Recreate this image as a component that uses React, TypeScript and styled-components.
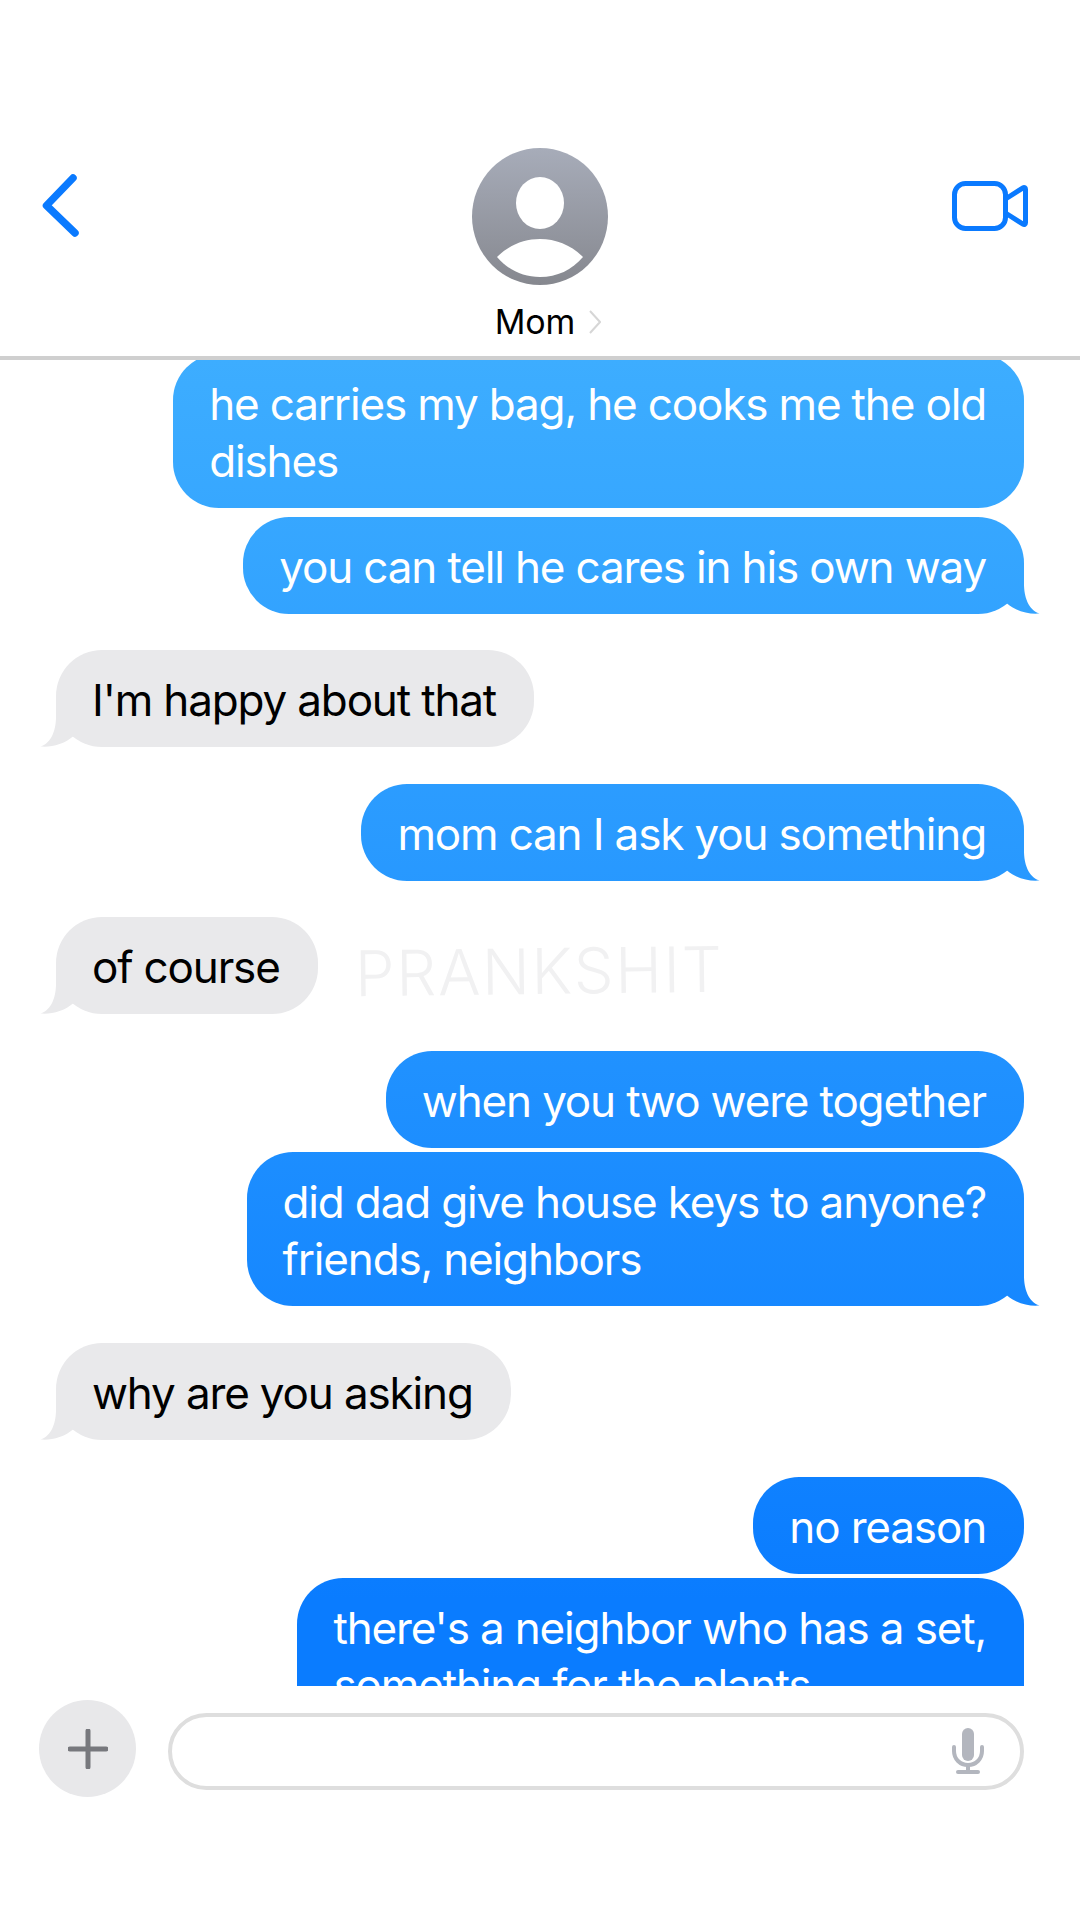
import React from "react";
import styled, { createGlobalStyle } from "styled-components";

const GlobalStyle = createGlobalStyle`
  html, body {
    margin: 0;
    padding: 0;
    background: #fff;
  }
  body {
    font-family: Inter, "Noto Sans", "Liberation Sans", sans-serif;
  }
`;

const Page = styled.div`
  width: 1080px;
  height: 1920px;
  display: flex;
  flex-direction: column;
  overflow: hidden;
`;

const Header = styled.header`
  height: 208px;
  padding-top: 148px;
  border-bottom: 4px solid #cfcfcf;
  display: grid;
  grid-template-columns: 1fr 136px 1fr;
`;

const BackIcon = styled.svg`
  width: 46px;
  height: 70px;
  margin: 23px 0 0 37px;
  fill: none;
  stroke: #0a7aff;
  stroke-width: 7.5px;
  stroke-linecap: round;
  stroke-linejoin: round;
`;

const VideoIcon = styled.svg`
  width: 80px;
  height: 54px;
  margin: 31px 49px 0 0;
  justify-self: end;
  fill: none;
  stroke: #0a7aff;
  stroke-width: 5px;
  stroke-linejoin: round;
`;

const Contact = styled.div`
  display: flex;
  flex-direction: column;
  align-items: center;
`;

const Avatar = styled.svg`
  width: 136px;
  height: 137px;
  flex: none;
`;

const NameRow = styled.div`
  display: flex;
  align-items: center;
  gap: 14px;
  margin: 17px 0 0 16px;
  white-space: nowrap;
`;

const Name = styled.span`
  font-size: 34px;
  line-height: 40px;
  letter-spacing: -0.2px;
  color: #000;
`;

const NameChevron = styled.svg`
  width: 12px;
  height: 24px;
  fill: none;
  stroke: #d6d6d6;
  stroke-width: 2px;
`;

const Thread = styled.main`
  position: relative;
  height: 1326px;
  overflow: hidden;
`;

const List = styled.div`
  display: flex;
  flex-direction: column;
  margin-top: -6px;
  padding: 0 56px;
`;

const Bubble = styled.div<{ $mine?: boolean; $gap: number }>`
  position: relative;
  flex: none;
  align-self: ${(p) => (p.$mine ? "flex-end" : "flex-start")};
  margin-top: ${(p) => p.$gap}px;
  padding: 22px 38px 18px 36px;
  border-radius: 46px;
  font-size: 44px;
  line-height: 57px;
  letter-spacing: -1.15px;
  white-space: pre-line;
  color: ${(p) => (p.$mine ? "#fff" : "#000")};
  background: ${(p) =>
    p.$mine
      ? "linear-gradient(180deg, #3dadff 360px, #0a7cff 1600px) fixed"
      : "#e9e9eb"};
`;

// 40x50 tail shape, clipped so the sent bubbles keep the page-wide gradient
const Tail = styled.div<{ $mine?: boolean }>`
  position: absolute;
  bottom: 0;
  width: 40px;
  height: 50px;
  background: inherit;
  clip-path: path("M0 0H24V20C24 32 28 46 39.5 49.5C28 50.5 16 47 7 39.5L0 30Z");
  ${(p) =>
    p.$mine
      ? "right: -16px;"
      : "left: -16px; transform: scaleX(-1);"}
`;

const Watermark = styled.div`
  position: absolute;
  left: 355px;
  top: 575px;
  font-size: 63px;
  line-height: 72px;
  font-weight: 300;
  letter-spacing: 1.7px;
  color: #f1f1f2;
  transform: rotate(-0.7deg);
  pointer-events: none;
`;

const Composer = styled.footer`
  display: flex;
  align-items: center;
  gap: 32px;
  padding: 14px 56px 0 39px;
`;

const PlusButton = styled.div`
  width: 97px;
  height: 97px;
  flex: none;
  border-radius: 50%;
  background: #e8e8ea;
  display: flex;
  align-items: center;
  justify-content: center;
`;

const PlusIcon = styled.svg`
  width: 40px;
  height: 40px;
  stroke: #77787d;
  stroke-width: 5px;
  stroke-linecap: round;
`;

const InputBox = styled.div`
  flex: 1;
  height: 77px;
  margin-top: 5px;
  box-sizing: border-box;
  border: 4px solid #dedede;
  border-radius: 39px;
  display: flex;
  align-items: center;
  justify-content: flex-end;
  padding-right: 36px;
`;

const MicIcon = styled.svg`
  width: 32px;
  height: 46px;
  fill: none;
  stroke: #b3b6be;
  stroke-width: 4px;
  stroke-linecap: round;
`;

type Message = { text: string; mine?: boolean; tail?: boolean; gap: number };

const messages: Message[] = [
  { text: "he carries my bag, he cooks me the old\ndishes", mine: true, gap: 0 },
  { text: "you can tell he cares in his own way", mine: true, tail: true, gap: 9 },
  { text: "I'm happy about that", tail: true, gap: 36 },
  { text: "mom can I ask you something", mine: true, tail: true, gap: 37 },
  { text: "of course", tail: true, gap: 36 },
  { text: "when you two were together", mine: true, gap: 37 },
  { text: "did dad give house keys to anyone?\nfriends, neighbors", mine: true, tail: true, gap: 4 },
  { text: "why are you asking", tail: true, gap: 37 },
  { text: "no reason", mine: true, gap: 37 },
  { text: "there's a neighbor who has a set,\nsomething for the plants", mine: true, gap: 4 },
];

export default function App() {
  return (
    <Page>
      <GlobalStyle />
      <Header>
        <BackIcon viewBox="0 0 46 70">
          <polyline points="36,7 9.500,34.500 38,62" />
        </BackIcon>
        <Contact>
          <Avatar viewBox="0 0 136 137">
            <defs>
              <linearGradient id="avatarFill" x1="0" y1="0" x2="0" y2="1">
                <stop offset="0" stopColor="#a7acb9" />
                <stop offset="1" stopColor="#86888f" />
              </linearGradient>
            </defs>
            <ellipse cx="68" cy="68.5" rx="68" ry="68.5" fill="url(#avatarFill)" />
            <ellipse cx="68" cy="55" rx="24" ry="26" fill="#fff" />
            <path d="M25 109C37 97 52 91 68 91C84 91 99 97 111 109C100 122 85 129 68 129C51 129 36 122 25 109Z" fill="#fff" />
          </Avatar>
          <NameRow>
            <Name>Mom</Name>
            <NameChevron viewBox="0 0 12 24">
              <polyline points="1,1 11,12 1,23" />
            </NameChevron>
          </NameRow>
        </Contact>
        <VideoIcon viewBox="0 0 80 54">
          <rect x="3.500" y="4.500" width="51" height="45" rx="11" />
          <path d="M54.500 20L72 8.800C73.300 8 74.500 8.800 74.500 10.300V43.700C74.500 45.200 73.300 46 72 45.200L54.500 34Z" />
        </VideoIcon>
      </Header>
      <Thread>
        <List>
          {messages.map((m) => (
            <Bubble key={m.text} $mine={m.mine} $gap={m.gap}>
              {m.text}
              {m.tail && <Tail $mine={m.mine} />}
            </Bubble>
          ))}
        </List>
        <Watermark>PRANKSHIT</Watermark>
      </Thread>
      <Composer>
        <PlusButton>
          <PlusIcon viewBox="0 0 40 40">
            <line x1="2" y1="20" x2="38" y2="20" />
            <line x1="20" y1="2" x2="20" y2="38" />
          </PlusIcon>
        </PlusButton>
        <InputBox>
          <MicIcon viewBox="0 0 32 46">
            <rect x="10" y="0" width="12" height="33" rx="6" fill="#b3b6be" stroke="none" />
            <path d="M2 19V23C2 31 8 37 16 37C24 37 30 31 30 23V19" />
            <line x1="16" y1="37" x2="16" y2="44" />
            <line x1="6" y1="44" x2="26" y2="44" />
          </MicIcon>
        </InputBox>
      </Composer>
    </Page>
  );
}
